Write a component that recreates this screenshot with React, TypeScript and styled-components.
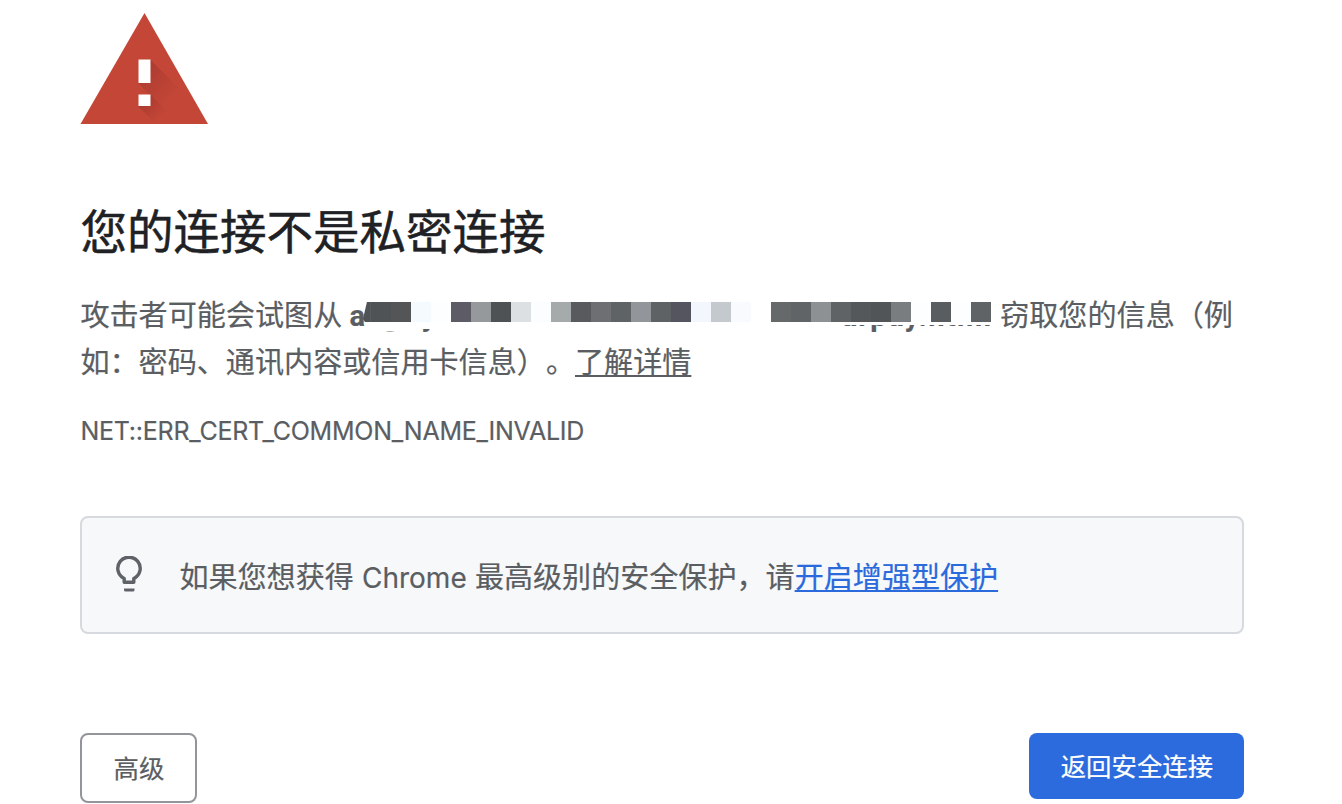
import styled, { createGlobalStyle } from "styled-components";

interface CellProps {
  color: string;
}

interface RemnantProps {
  left: number;
  cut: number;
}

const maskColors: string[] = [
  "#505355", "#535557", "#f5faff", "#fdfeff", "#5d5c66", "#95999b", "#4f5254", "#dce0e3",
  "#fcfdff", "#a5abab", "#585a5d", "#6e6f73", "#5f6365", "#92969b", "#5e6264", "#55555f",
  "#f3f6fc", "#c4c9cd", "#f9fafd", "#ffffff", "#65696a", "#606466", "#8d9193", "#5f6366",
  "#55585b", "#525558", "#797d80", "#fdfeff", "#595d60", "#fcfeff", "#606366",
];

const App = () => {
  return (
    <>
      <GlobalStyle />
      <Page>
        <WarningIcon />
        <Title>您的连接不是私密连接</Title>
        <Message>
          攻击者可能会试图从{" "}
          <Host>
            a
            <Remnant left={33} cut={38.5}>g</Remnant>
            <Remnant left={72} cut={36}>y</Remnant>
            <Remnant left={492} cut={32}>arpay.html</Remnant>
            <Mask>
              <Wedge />
              {maskColors.map((color, i) => (
                <Cell key={i} color={color} />
              ))}
            </Mask>
          </Host>{" "}
          窃取您的信息（例如：密码、通讯内容或信用卡信息）。<MoreLink href="#">了解详情</MoreLink>
        </Message>
        <ErrorCode>NET::ERR_CERT_COMMON_NAME_INVALID</ErrorCode>
        <Tip>
          <BulbIcon />
          <TipText>
            如果您想获得 <Latin>Chrome</Latin> 最高级别的安全保护，请<TipLink href="#">开启增强型保护</TipLink>
          </TipText>
        </Tip>
        <Actions>
          <AdvancedButton>高级</AdvancedButton>
          <SafeButton>返回安全连接</SafeButton>
        </Actions>
      </Page>
    </>
  );
};
export default App;

const WarningIcon = () => (
  <WarningSvg viewBox="0 0 128 111">
    <defs>
      <linearGradient id="shade" gradientUnits="userSpaceOnUse" x1="62" y1="50" x2="94" y2="82">
        <stop offset="0" stopColor="#8e2f28" stopOpacity="0.5" />
        <stop offset="1" stopColor="#8e2f28" stopOpacity="0" />
      </linearGradient>
      <linearGradient id="shadeDot" gradientUnits="userSpaceOnUse" x1="60" y1="84" x2="80" y2="104">
        <stop offset="0" stopColor="#8e2f28" stopOpacity="0.6" />
        <stop offset="1" stopColor="#8e2f28" stopOpacity="0" />
      </linearGradient>
    </defs>
    <path d="M64.5 0 128 111H0.5z" fill="#c34637" />
    <path d="M70 46.5 101 77.5 109 96 91 103 58 70z" fill="url(#shade)" />
    <path d="M70 81.5 99.5 111H76L58 93z" fill="url(#shadeDot)" />
    <path d="M58.5 46.5h12v23.5h-12zM58.5 81.5h12V93h-12z" fill="#fff" />
  </WarningSvg>
);

const BulbIcon = () => (
  <BulbSvg viewBox="0 0 26 36">
    <path
      d="M8.2 26.2V22.5A11.2 11.2 0 1 1 17.8 22.5V26.2Z"
      fill="none"
      stroke="#5f6368"
      strokeWidth="3.4"
      strokeLinejoin="round"
    />
    <path d="M8 32.4h10.500v1.500a1.500 1.500 0 0 1-1.500 1.500H9.500A1.500 1.500 0 0 1 8 33.900z" fill="#5f6368" />
  </BulbSvg>
);

const GlobalStyle = createGlobalStyle`
  body {
    margin: 0;
    background: #fff;
    color: #5a5e62;
    font-family: Inter, "Noto Sans CJK SC", sans-serif;
    overflow: hidden;
  }
`;

const Page = styled.main`
  box-sizing: border-box;
  width: 1164px;
  height: 804px;
  margin-left: 80.4px;
  padding-top: 13px;
`;

const WarningSvg = styled.svg`
  display: block;
  width: 128px;
  height: 111px;
`;

const Title = styled.h1`
  margin: 80px 0 0;
  color: #202124;
  font-size: 46.5px;
  font-weight: 400;
  line-height: 56px;
  -webkit-text-stroke: 0.5px #202124;
`;

const Message = styled.p`
  margin: 33px 0 0;
  font-family: Roboto, "Noto Sans CJK SC", sans-serif;
  font-size: 29.1px;
  line-height: 46.5px;
  text-spacing-trim: space-all;
  -webkit-text-stroke: 0.2px #5a5e62;
`;

const Host = styled.strong`
  display: inline-block;
  position: relative;
  width: 643.5px;
`;

const Remnant = styled.span<RemnantProps>`
  position: absolute;
  top: 0;
  left: ${props => props.left}px;
  letter-spacing: 1.3px;
  clip-path: inset(${props => props.cut}px 0 0 0);
`;

const Mask = styled.span`
  position: absolute;
  top: 9px;
  right: 2px;
  display: flex;
`;

const Wedge = styled.span`
  width: 8px;
  height: 20px;
  background: #505355;
  clip-path: polygon(50% 0, 100% 0, 100% 100%, 25% 100%, 0 85%);
`;

const Cell = styled.span<CellProps>`
  width: 20px;
  height: 20px;
  background: ${props => props.color};
`;

const MoreLink = styled.a`
  color: inherit;
  text-decoration: underline;
`;

const ErrorCode = styled.div`
  margin-top: 27px;
  font-size: 25px;
  line-height: 36px;
  letter-spacing: -0.24px;
  -webkit-text-stroke: 0.2px;
`;

const Tip = styled.div`
  box-sizing: border-box;
  display: flex;
  align-items: flex-start;
  height: 118px;
  margin-top: 67px;
  padding: 38px 34px;
  border: 2px solid #d6d9dd;
  border-radius: 8px;
  background: #f7f8fa;
`;

const BulbSvg = styled.svg`
  width: 26px;
  height: 36px;
  flex: none;
`;

const TipText = styled.div`
  margin: -1px 0 0 37px;
  font-family: Roboto, "Noto Sans CJK SC", sans-serif;
  font-size: 29.07px;
  line-height: 46px;
  -webkit-text-stroke: 0.2px;
`;

const Latin = styled.span`
  margin: 0 1px;
  font-family: Inter, sans-serif;
  font-size: 28px;
`;

const TipLink = styled.a`
  color: #2a6adc;
  text-decoration: underline;
`;

const Actions = styled.div`
  display: flex;
  align-items: flex-start;
  justify-content: space-between;
  margin-top: 99px;
`;

const Button = styled.button`
  box-sizing: border-box;
  padding: 2px 0 0;
  border-radius: 8px;
  font-family: inherit;
  font-size: 25.4px;
  line-height: 38px;
  -webkit-text-stroke: 0.2px;
`;

const AdvancedButton = styled(Button)`
  width: 117px;
  height: 70px;
  border: 2px solid #929599;
  background: #fff;
  color: #5a5e62;
`;

const SafeButton = styled(Button)`
  width: 215px;
  height: 66px;
  border: none;
  background: #2c6bdd;
  color: #fff;
`;
